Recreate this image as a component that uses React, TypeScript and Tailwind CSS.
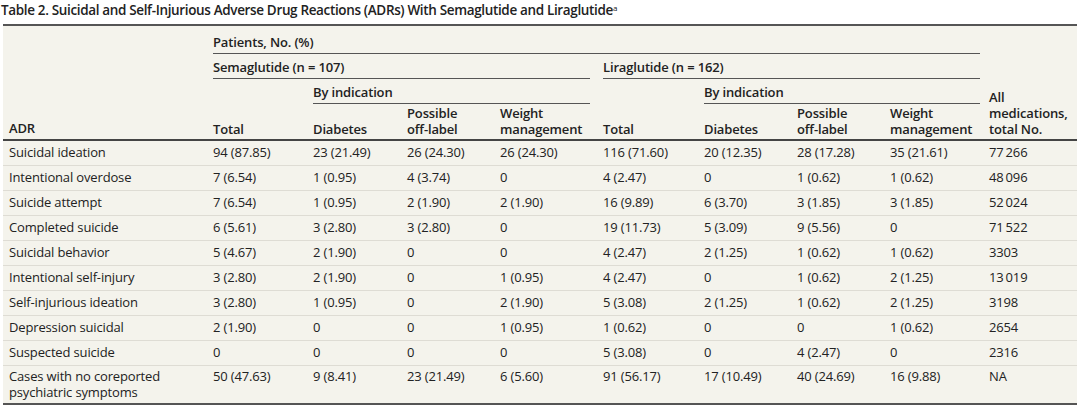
const cols = "grid grid-cols-[204px_100px_94px_93px_103px_101px_93px_93px_99px_1fr]";

const rows: string[][] = [
  ["Suicidal ideation", "94 (87.85)", "23 (21.49)", "26 (24.30)", "26 (24.30)", "116 (71.60)", "20 (12.35)", "28 (17.28)", "35 (21.61)", "77\u2009266"],
  ["Intentional overdose", "7 (6.54)", "1 (0.95)", "4 (3.74)", "0", "4 (2.47)", "0", "1 (0.62)", "1 (0.62)", "48\u2009096"],
  ["Suicide attempt", "7 (6.54)", "1 (0.95)", "2 (1.90)", "2 (1.90)", "16 (9.89)", "6 (3.70)", "3 (1.85)", "3 (1.85)", "52\u2009024"],
  ["Completed suicide", "6 (5.61)", "3 (2.80)", "3 (2.80)", "0", "19 (11.73)", "5 (3.09)", "9 (5.56)", "0", "71\u2009522"],
  ["Suicidal behavior", "5 (4.67)", "2 (1.90)", "0", "0", "4 (2.47)", "2 (1.25)", "1 (0.62)", "1 (0.62)", "3303"],
  ["Intentional self-injury", "3 (2.80)", "2 (1.90)", "0", "1 (0.95)", "4 (2.47)", "0", "1 (0.62)", "2 (1.25)", "13\u2009019"],
  ["Self-injurious ideation", "3 (2.80)", "1 (0.95)", "0", "2 (1.90)", "5 (3.08)", "2 (1.25)", "1 (0.62)", "2 (1.25)", "3198"],
  ["Depression suicidal", "2 (1.90)", "0", "0", "1 (0.95)", "1 (0.62)", "0", "0", "1 (0.62)", "2654"],
  ["Suspected suicide", "0", "0", "0", "0", "5 (3.08)", "0", "4 (2.47)", "0", "2316"],
]

const last = ["50 (47.63)", "9 (8.41)", "23 (21.49)", "6 (5.60)", "91 (56.17)", "17 (10.49)", "40 (24.69)", "16 (9.88)", "NA"]

export default function App() {
  return (
    <div className="w-[1080px] h-[410px] bg-white text-[#222] font-['Open_Sans',sans-serif] text-[13px] tracking-[-0.15px]">
      <div className="h-[24px] pl-[1px] pt-[1px] leading-[18px] text-[13.5px] font-semibold tracking-[-0.35px]">
        Table 2. Suicidal and Self-Injurious Adverse Drug Reactions (ADRs) With Semaglutide and Liraglutide
        <sup className="text-[8px] font-normal">a</sup>
      </div>

      <div className="mx-[3px] bg-[#f4f3ec] border-t-2 border-b-2 border-[#555]">
        {/* header */}
        <div className={`${cols} grid-rows-[28px_25px_25px_35px] pl-[6px] border-b-2 border-[#444] font-semibold leading-[16px]`}>
          <div className="col-start-1 row-start-1 row-span-4 self-end pb-[3px]">ADR</div>

          <div className="col-start-2 col-span-8 row-start-1 mr-[9px] flex items-end pb-[3px] border-b-[1.5px] border-[#555]">
            Patients, No. (%)
          </div>

          <div className="col-start-2 col-span-4 row-start-2 mr-[13px] flex items-end pb-[3px] border-b-[1.5px] border-[#555]">
            Semaglutide (n = 107)
          </div>
          <div className="col-start-6 col-span-4 row-start-2 mr-[9px] flex items-end pb-[3px] border-b-[1.5px] border-[#555]">
            Liraglutide (n = 162)
          </div>

          <div className="col-start-3 col-span-3 row-start-3 mr-[13px] flex items-end pb-[3px] border-b-[1.5px] border-[#555]">
            By indication
          </div>
          <div className="col-start-7 col-span-3 row-start-3 mr-[9px] flex items-end pb-[3px] border-b-[1.5px] border-[#555]">
            By indication
          </div>

          <div className="col-start-2 row-start-4 self-end pb-[2px]">Total</div>
          <div className="col-start-3 row-start-4 self-end pb-[2px]">Diabetes</div>
          <div className="col-start-4 row-start-4 self-end pb-[2px]">Possible<br />off-label</div>
          <div className="col-start-5 row-start-4 self-end pb-[2px]">Weight<br />management</div>
          <div className="col-start-6 row-start-4 self-end pb-[2px]">Total</div>
          <div className="col-start-7 row-start-4 self-end pb-[2px]">Diabetes</div>
          <div className="col-start-8 row-start-4 self-end pb-[2px]">Possible<br />off-label</div>
          <div className="col-start-9 row-start-4 self-end pb-[2px]">Weight<br />management</div>

          <div className="col-start-10 row-start-1 row-span-4 self-end pb-[2px]">
            All<br />medications,<br />total No.
          </div>
        </div>

        {/* body */}
        {rows.map((r, i) => (
          <div key={i} className={`${cols} h-[25px] items-center pl-[6px] border-b border-[#dedcd4]`}>
            {r.map((c, j) => (
              <div key={j} className="whitespace-nowrap">{c}</div>
            ))}
          </div>
        ))}
        <div className={`${cols} h-[37px] pl-[6px] pt-[2px] leading-[16px]`}>
          <div>Cases with no coreported<br />psychiatric symptoms</div>
          {last.map((c, j) => (
            <div key={j} className="whitespace-nowrap">{c}</div>
          ))}
        </div>
      </div>
    </div>
  )
}
